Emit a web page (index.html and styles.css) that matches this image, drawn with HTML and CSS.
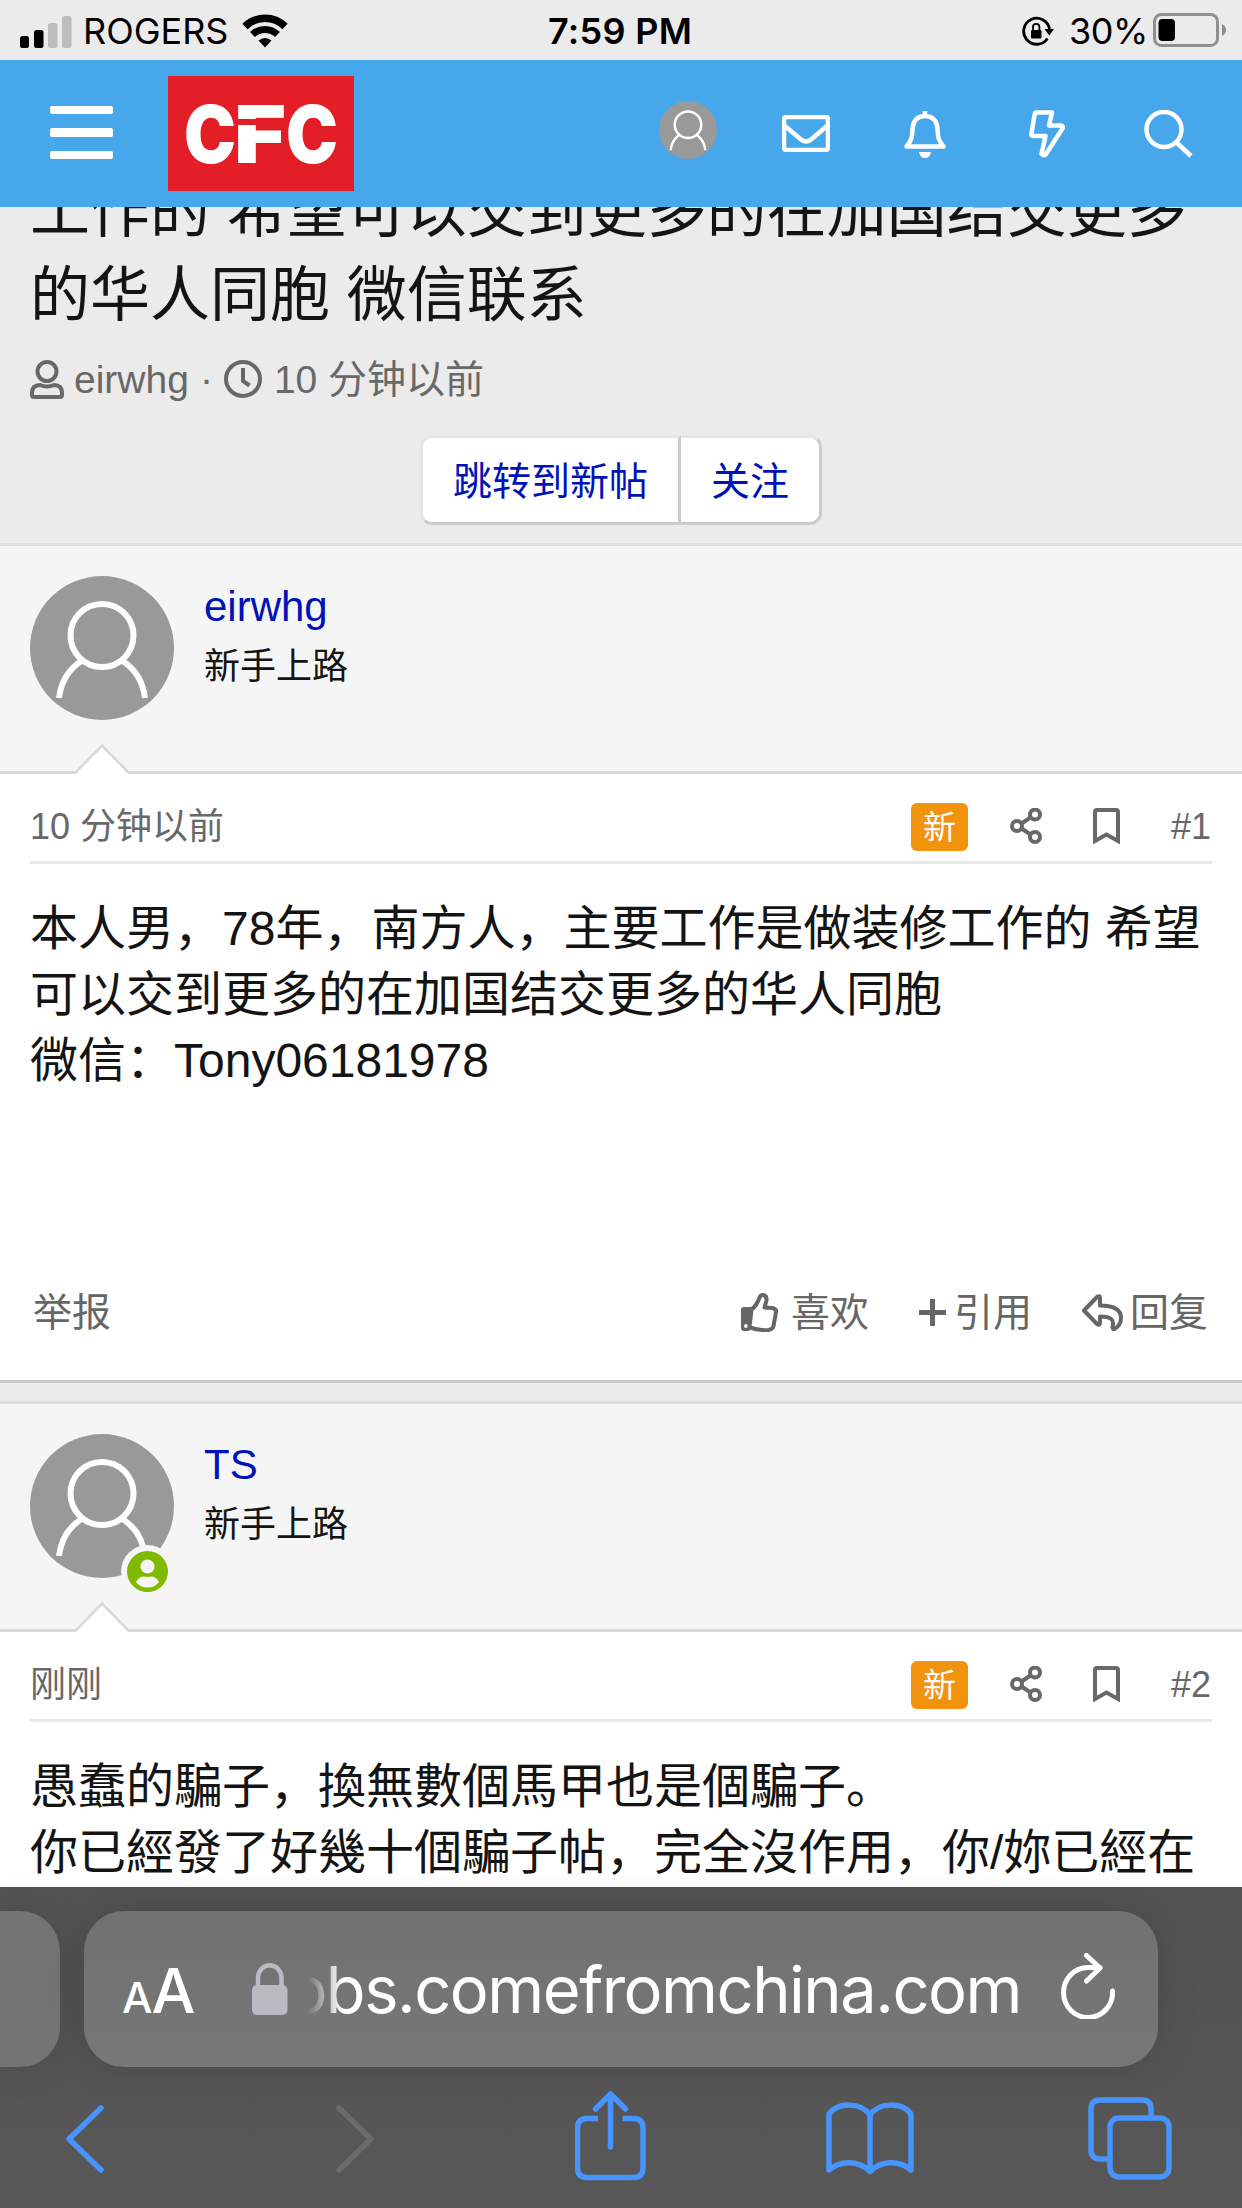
FILE: index.html
```html
<!DOCTYPE html>
<html lang="zh-CN">
<head>
  <meta charset="UTF-8">
  <meta name="viewport" content="width=device-width, initial-scale=1.0">
  <title>CFC</title>
  <link rel="stylesheet" href="styles.css">
</head>
<body>
  <div class="status-bar">
    <svg class="signal" width="52" height="33" viewBox="0 0 52 33">
      <rect x="0" y="21" width="9" height="12" rx="2.5"/>
      <rect x="14" y="15" width="9.500" height="18" rx="2.5"/>
      <rect x="28" y="8" width="9.500" height="25" rx="2.5" fill="#bdbdbd"/>
      <rect x="42" y="1" width="9.500" height="32" rx="2.5" fill="#bdbdbd"/>
    </svg>
    <span class="carrier">ROGERS</span>
    <svg class="wifi" width="46" height="34" viewBox="0 0 46 34">
      <path d="M3 12.500a28.500 28.500 0 0 1 40 0" fill="none" stroke="#000" stroke-width="7.500"/>
      <path d="M10.500 20.500a18 18 0 0 1 25 0" fill="none" stroke="#000" stroke-width="7"/>
      <path d="M16.500 26.500q6.500-5 13 0L23 33.500z"/>
    </svg>
    <span class="time">7:59 PM</span>
    <svg class="rotation-lock" width="32" height="30" viewBox="0 0 32 30">
      <path d="M25.500 22.500A13 13 0 1 1 27.500 13" fill="none" stroke="#000" stroke-width="2.800"/>
      <path d="M22.500 13H32l-4.700 6.500z"/>
      <rect x="9" y="14" width="10.500" height="8.500" rx="1"/>
      <path d="M11 14v-3a3.200 3.200 0 0 1 6.400 0v3" fill="none" stroke="#000" stroke-width="1.800"/>
    </svg>
    <span class="percent">30%</span>
    <svg class="battery" width="74" height="34" viewBox="0 0 74 34">
      <rect x="1.500" y="1.500" width="63" height="31" rx="7" fill="none" stroke="#8f8f8f" stroke-width="3"/>
      <rect x="5.500" y="6" width="16.500" height="22" rx="4"/>
      <path d="M69 11q4 2 4 6t-4 6z" fill="#8f8f8f"/>
    </svg>
  </div>

  <header class="header">
    <div class="menu"><span></span><span></span><span></span></div>
    <div class="logo">
      <svg width="186" height="115" viewBox="0 0 186 115">
        <text x="16" y="87" textLength="52" lengthAdjust="spacingAndGlyphs">C</text>
        <text x="66" y="87" textLength="52" lengthAdjust="spacingAndGlyphs">F</text>
        <text x="118" y="87" textLength="52" lengthAdjust="spacingAndGlyphs">C</text>
        <rect x="69" y="43" width="49" height="6" fill="#e31e26"/>
      </svg>
    </div>
    <nav class="nav">
      <svg class="nav-avatar" width="58" height="58" viewBox="0 0 144 144">
        <circle cx="72" cy="72" r="72" fill="#999"/>
        <g fill="none" stroke="#fff" stroke-width="6">
          <circle cx="72" cy="59" r="33"/>
          <path d="M29 122c2-17 10-30 22-38M115 122c-2-17-10-30-22-38"/>
        </g>
      </svg>
      <svg class="nav-mail" width="48" height="37" viewBox="0 0 48 37">
        <rect x="2" y="2" width="44" height="33" rx="2"/>
        <path d="M3 11l16 13.500q5 4 10 0L45 11"/>
      </svg>
      <svg class="nav-bell" width="42" height="48" viewBox="0 0 42 48">
        <path d="M2.500 36.500C8 30 8 27 8.500 19C9 10 14 6 21 6s12 4 12.500 13c.5 8 .5 11 6 17.500z"/>
        <path d="M21 1V6"/>
        <path class="solid" d="M15 42h12q-1 6-6 6t-6-6z"/>
      </svg>
      <svg class="nav-bolt" width="36" height="48" viewBox="0 0 36 48">
        <path d="M7.500 2.500H23L20 15.500h12q2.500.5 1.500 3L17 44q-2 2.500-4.500 0l4-18H4Q2 26 2.500 23.500L5.500 5q.3-2.500 2-2.500z"/>
      </svg>
      <svg class="nav-search" width="49" height="48" viewBox="0 0 49 48">
        <circle cx="20" cy="19.500" r="17.500"/>
        <path d="M32.500 32.500L47 46"/>
      </svg>
    </nav>
  </header>

  <main class="page">
    <section class="thread-head">
      <h1>工作的 希望可以交到更多的在加国结交更多<br>的华人同胞 微信联系</h1>
      <div class="thread-meta">
        <svg width="34" height="39" viewBox="0 0 34 39">
          <circle cx="17" cy="11.500" r="9.500"/>
          <path d="M10 25q7 3 14 0 8 0 8 8v2q0 2-2 2H4q-2 0-2-2v-2q0-8 8-8z"/>
        </svg>
        <span class="starter">eirwhg</span>
        <span class="dot">·</span>
        <svg width="38" height="38" viewBox="0 0 38 38">
          <circle cx="19" cy="19" r="17"/>
          <path d="M19 8v13l6.500 4.500"/>
        </svg>
        <span class="started">10 分钟以前</span>
      </div>
      <div class="button-group">
        <a class="button">跳转到新帖</a>
        <a class="button">关注</a>
      </div>
    </section>

    <article class="post">
      <div class="user">
        <div class="avatar">
          <svg width="144" height="144" viewBox="0 0 144 144">
            <circle cx="72" cy="72" r="72" fill="#999"/>
            <g fill="none" stroke="#fff" stroke-width="6">
              <circle cx="72" cy="59.500" r="31.500"/>
              <path d="M29 122c2-16 10-29 22.500-37M115 122c-2-16-10-29-22.500-37"/>
            </g>
          </svg>
        </div>
        <div class="user-info">
          <a class="username">eirwhg</a>
          <div class="user-title">新手上路</div>
        </div>
        <svg class="arrow" width="54" height="30" viewBox="0 0 54 30">
          <path d="M0 30L27 2l27 28z" fill="#fefefe"/>
          <path d="M0 29L27 1.500 54 29" fill="none" stroke="#d8d8d8" stroke-width="2.500"/>
        </svg>
      </div>
      <div class="post-main">
        <div class="post-head">
          <span class="date">10 分钟以前</span>
          <span class="badge">新</span>
          <svg class="share" width="32" height="36" viewBox="0 0 32 36">
            <circle cx="25" cy="6.500" r="5"/>
            <circle cx="7" cy="18" r="5"/>
            <circle cx="25" cy="29" r="5"/>
            <path d="M11.500 15.500l9-6M11.500 20.500l9 6"/>
          </svg>
          <svg class="bookmark" width="27" height="36" viewBox="0 0 27 36">
            <path d="M2 33V4q0-2 2-2h19q2 0 2 2v29l-11.500-6.500z"/>
          </svg>
          <span class="number">#1</span>
        </div>
        <div class="post-body">本人男，78年，南方人，主要工作是做装修工作的 希望<br>可以交到更多的在加国结交更多的华人同胞<br>微信：Tony06181978</div>
        <div class="post-actions">
          <span class="report">举报</span>
          <svg class="like" width="37" height="39" viewBox="0 0 37 39">
            <path class="cuff" d="M0 17q0-3 3-3h7v21l-2 3H3q-3 0-3-3z"/>
            <circle class="hole" cx="5" cy="33" r="2"/>
            <path d="M10.500 16.500C14 14 17 9 18.500 4.500q1-3 4-2.500 3.500 1 3 5.500l-2 7 8 .5q4 1 3.500 4l-2.500 14q-1 3.500-5 4-8 .8-19-2.500z"/>
          </svg>
          <span class="like-text">喜欢</span>
          <svg class="quote" width="27" height="27" viewBox="0 0 27 27">
            <path d="M13.500 0v27M0 13.500h27"/>
          </svg>
          <span class="quote-text">引用</span>
          <svg class="reply" width="41" height="37" viewBox="0 0 41 37">
            <path d="M2 16.500L15 3q3-2 3 1v7.500c14 0 21 4 21 12.500 0 5-3 9-6.500 11q-2 .5-2-2c2-7-1-10.500-12.500-10.500V29q0 3-3 1z"/>
          </svg>
          <span class="reply-text">回复</span>
        </div>
      </div>
    </article>

    <article class="post">
      <div class="user">
        <div class="avatar">
          <svg width="144" height="144" viewBox="0 0 144 144">
            <circle cx="72" cy="72" r="72" fill="#999"/>
            <g fill="none" stroke="#fff" stroke-width="6">
              <circle cx="72" cy="59.500" r="31.500"/>
              <path d="M29 122c2-16 10-29 22.500-37M115 122c-2-16-10-29-22.500-37"/>
            </g>
          </svg>
          <svg class="online" width="53" height="53" viewBox="0 0 53 53">
            <circle cx="26.500" cy="26.500" r="26.500" fill="#f5f5f5"/>
            <circle cx="26.500" cy="26.500" r="20.500" fill="#7fb900"/>
            <circle cx="26.500" cy="21.500" r="7" fill="#f5f5f5"/>
            <path d="M15 37q4-7 11.500-5 7.500-2 11.500 5-4 5.500-11.500 5.500T15 37z" fill="#f5f5f5"/>
          </svg>
        </div>
        <div class="user-info">
          <a class="username">TS</a>
          <div class="user-title">新手上路</div>
        </div>
        <svg class="arrow" width="54" height="30" viewBox="0 0 54 30">
          <path d="M0 30L27 2l27 28z" fill="#fefefe"/>
          <path d="M0 29L27 1.500 54 29" fill="none" stroke="#d8d8d8" stroke-width="2.500"/>
        </svg>
      </div>
      <div class="post-main">
        <div class="post-head">
          <span class="date">刚刚</span>
          <span class="badge">新</span>
          <svg class="share" width="32" height="36" viewBox="0 0 32 36">
            <circle cx="25" cy="6.500" r="5"/>
            <circle cx="7" cy="18" r="5"/>
            <circle cx="25" cy="29" r="5"/>
            <path d="M11.500 15.500l9-6M11.500 20.500l9 6"/>
          </svg>
          <svg class="bookmark" width="27" height="36" viewBox="0 0 27 36">
            <path d="M2 33V4q0-2 2-2h19q2 0 2 2v29l-11.500-6.500z"/>
          </svg>
          <span class="number">#2</span>
        </div>
        <div class="post-body">愚蠢的騙子，換無數個馬甲也是個騙子。<br>你已經發了好幾十個騙子帖，完全沒作用，你/妳已經在</div>
      </div>
    </article>
  </main>

  <footer class="browser">
    <div class="tabs-row">
      <div class="tab-prev"></div>
      <div class="address">
        <span class="text-size"><small>A</small>A</span>
        <svg class="lock" width="36" height="52" viewBox="0 0 36 52">
          <rect x="0" y="22" width="35.500" height="30" rx="5" fill="#bbbac2"/>
          <path d="M6 23V15a11.500 12.500 0 0 1 23.500 0v8" fill="none" stroke="#bbbac2" stroke-width="4.500"/>
        </svg>
        <div class="url"><span>obs.comefromchina.com</span></div>
        <svg class="reload" width="54" height="66" viewBox="0 0 54 66">
          <path d="M51.500 38A24.500 25 0 1 1 27 14.500h12M25.500 2.500L39 15 25.500 28"/>
        </svg>
      </div>
    </div>
    <div class="toolbar">
      <svg class="back" width="38" height="68" viewBox="0 0 38 68">
        <path d="M35 3L3 34l32 31"/>
      </svg>
      <svg class="forward" width="38" height="68" viewBox="0 0 38 68">
        <path d="M3 3l32 31L3 65"/>
      </svg>
      <svg class="share-sheet" width="71" height="90" viewBox="0 0 71 90">
        <path d="M23 27.500H12q-9.500 0-9.500 9.500v40q0 9.500 9.500 9.500h46.500q9.500 0 9.500-9.500V37q0-9.500-9.500-9.500H47.500" stroke-linecap="butt"/>
        <path d="M35.500 56V3.500M20.500 18l15-15 15 15"/>
      </svg>
      <svg class="book" width="88" height="73" viewBox="0 0 88 73">
        <path d="M44 69.500V13C35 0 12 0 3 12v56c11-10 30-10 41 1.500 11-11.500 30-11.500 41-1.500V12C76 0 53 0 44 13"/>
      </svg>
      <svg class="tabs" width="84" height="83" viewBox="0 0 84 83">
        <rect x="22" y="21" width="59" height="59" rx="9"/>
        <path d="M22 62H12q-9 0-9-9V12q0-9 9-9h42q9 0 9 9v9"/>
      </svg>
    </div>
  </footer>
</body>
</html>
```
FILE: styles.css
```css
* {
  box-sizing: border-box;
}

body {
  margin: 0;
  width: 1242px;
  height: 2208px;
  overflow: hidden;
  display: flex;
  flex-direction: column;
  background: #ebebeb;
  color: #141414;
  font-family: "Liberation Sans", "Noto Sans CJK SC", sans-serif;
}

svg {
  display: block;
  flex: none;
}

/* phone status bar */
.status-bar {
  height: 60px;
  flex: none;
  display: flex;
  align-items: center;
  padding: 2px 15px 0 20px;
  font-family: Inter, sans-serif;
  font-size: 36px;
  color: #000;
  white-space: nowrap;
}

.carrier {
  width: 144px;
  margin-left: 11px;
}

.wifi {
  margin-left: 15px;
}

.time {
  width: 146px;
  margin-left: 260px;
  font-weight: 600;
  letter-spacing: 0.3px;
}

.rotation-lock {
  margin-left: auto;
}

.percent {
  width: 76px;
  margin-left: 15px;
  letter-spacing: -0.5px;
}

.battery {
  margin-left: 8px;
  margin-bottom: 2px;
}

/* site header */
.header {
  height: 147px;
  flex: none;
  display: flex;
  align-items: center;
  padding: 0 49px 0 50px;
  background: #47a7eb;
}

.menu {
  width: 63px;
  display: flex;
  flex-direction: column;
  gap: 14px;
  margin-bottom: 2px;
}

.menu span {
  height: 8.500px;
  border-radius: 2px;
  background: #fff;
}

.logo {
  width: 186px;
  height: 115px;
  margin-left: 55px;
  background: #e31e26;
}

.logo text {
  font-family: Inter, sans-serif;
  font-size: 80px;
  font-weight: 900;
  fill: #fff;
}

.nav {
  margin-left: auto;
  display: flex;
  align-items: center;
  fill: none;
  stroke: #fff;
  stroke-width: 4.500;
  stroke-linejoin: round;
}

.nav-avatar {
  margin-bottom: 7px;
  stroke: none;
}

.nav-mail {
  margin-left: 65px;
}

.nav-bell {
  margin-left: 74px;
}

.nav-bell .solid {
  fill: #fff;
  stroke: none;
}

.nav-bolt {
  margin-left: 83px;
}

.nav-search {
  margin-left: 79px;
}

/* thread */
.page {
  flex: 1;
  min-height: 0;
  overflow: hidden;
}

.thread-head {
  height: 373px;
  margin-top: -37px;
}

h1 {
  margin: 0;
  padding-left: 30px;
  font-size: 60px;
  font-weight: 400;
  line-height: 84px;
  white-space: nowrap;
}

.thread-meta {
  display: flex;
  align-items: center;
  height: 54px;
  margin-top: 14px;
  padding-left: 30px;
  font-size: 39px;
  color: #686868;
}

.thread-meta span {
  line-height: 50px;
  padding-top: 2px;
}

.thread-meta svg {
  fill: none;
  stroke: #686868;
  stroke-width: 4;
}

.starter {
  margin-left: 10px;
}

.dot {
  margin: 0 11px;
}

.started {
  margin-left: 12px;
}

.button-group {
  display: flex;
  justify-content: center;
  margin-top: 29px;
}

.button {
  height: 90px;
  padding: 0 30px;
  border: 3px solid;
  border-color: #e5e5e5 #cbcbcb #cbcbcb #e5e5e5;
  background: #fefefe;
  color: #0012b8;
  font-size: 39px;
  line-height: 87px;
}

.button:first-child {
  border-radius: 12px 0 0 12px;
}

.button:last-child {
  border-left: 0;
  border-radius: 0 12px 12px 0;
}

.post {
  margin-bottom: 18px;
  border-top: 3px solid #dedede;
  border-bottom: 3px solid #cacaca;
  background: #fefefe;
}

.user {
  position: relative;
  display: flex;
  gap: 30px;
  height: 228px;
  padding: 30px;
  border-bottom: 3px solid #d8d8d8;
  background: #f5f5f5;
}

.avatar {
  position: relative;
  width: 144px;
  height: 144px;
}

.online {
  position: absolute;
  left: 91px;
  top: 111px;
}

.user-info {
  padding-top: 1px;
}

.username {
  display: block;
  font-size: 42px;
  line-height: 60px;
  color: #0012b8;
}

.user-title {
  margin-top: 5px;
  font-size: 36px;
  line-height: 50px;
}

.arrow {
  position: absolute;
  left: 75px;
  bottom: -3px;
}

.post-main {
  padding: 0 30px;
}

.post-head {
  display: flex;
  align-items: center;
  height: 90px;
  padding-top: 19px;
  border-bottom: 3px solid #e8e8e8;
  font-size: 36px;
  line-height: 50px;
  color: #686868;
}

.post-head svg {
  margin-bottom: 2px;
  fill: none;
  stroke: #686868;
  stroke-width: 4;
}

.badge {
  width: 57px;
  height: 48px;
  margin-left: auto;
  border-radius: 6px;
  background: #f2930d;
  color: #fefefe;
  font-size: 33px;
  line-height: 50px;
  text-align: center;
}

.share {
  margin-left: 42px;
}

.bookmark {
  margin-left: 51px;
}

.number {
  width: 41px;
  margin-left: 51px;
}

.post-body {
  min-height: 422px;
  padding-top: 32px;
  font-size: 48px;
  line-height: 66px;
  white-space: nowrap;
}

.post-actions {
  display: flex;
  align-items: center;
  height: 94px;
  padding: 0 4px 40px 3px;
  font-size: 39px;
  line-height: 54px;
  color: #666;
}

.post-actions svg {
  margin-bottom: 1px;
  fill: none;
  stroke: #666;
  stroke-width: 4;
  stroke-linejoin: round;
}

.post-actions .cuff {
  fill: #666;
  stroke: none;
}

.post-actions .hole {
  fill: #fefefe;
  stroke: none;
}

.like {
  margin-left: auto;
}

.like-text {
  margin-left: 13px;
}

.quote {
  margin-left: 50px;
}

.post-actions .quote {
  stroke-width: 5;
}

.quote-text {
  margin-left: 8px;
}

.reply {
  margin-left: 50px;
}

.reply-text {
  margin-left: 7px;
}

/* browser chrome */
.browser {
  position: relative;
  height: 321px;
  flex: none;
  padding-top: 24px;
  background: linear-gradient(#535353, #575757);
}

.tabs-row {
  display: flex;
  gap: 24px;
}

.tab-prev {
  width: 60px;
  height: 156px;
  border-radius: 0 40px 40px 0;
  background: #747474;
  box-shadow: 0 0 40px rgba(0, 0, 0, 0.12);
}

.address {
  width: 1074px;
  height: 156px;
  display: flex;
  align-items: center;
  padding: 0 43px 0 38px;
  border-radius: 40px;
  background: linear-gradient(#717171, #777);
  box-shadow: 0 0 40px rgba(0, 0, 0, 0.16);
  color: #fff;
  font-family: Inter, sans-serif;
}

.text-size {
  width: 73px;
  padding-top: 3px;
  font-size: 62px;
  font-weight: 500;
  letter-spacing: -1px;
  white-space: nowrap;
}

.text-size small {
  font-size: 43px;
}

.lock {
  margin-left: 57px;
}

.url {
  width: 713px;
  margin-left: 20px;
  padding-top: 2px;
  overflow: hidden;
  display: flex;
  justify-content: flex-end;
  font-size: 65px;
  letter-spacing: -1.5px;
  line-height: 80px;
  white-space: nowrap;
  -webkit-mask-image: linear-gradient(90deg, transparent, #000 34px);
  mask-image: linear-gradient(90deg, transparent, #000 34px);
}

.reload {
  margin: 0 0 6px auto;
  fill: none;
  stroke: #fff;
  stroke-width: 5;
  stroke-linecap: round;
  stroke-linejoin: round;
}

.toolbar {
  position: relative;
  display: flex;
  align-items: center;
  height: 90px;
  margin-top: 24px;
  padding: 0 70px 0 66px;
  fill: none;
  stroke: #4794ff;
  stroke-width: 5.500;
  stroke-linecap: round;
  stroke-linejoin: round;
}

.back {
  margin-top: 5px;
}

.forward {
  margin: 5px 0 0 232px;
  stroke: #6b6b6b;
}

.share-sheet {
  margin-left: 201px;
}

.book {
  margin: 4px 0 0 180px;
}

.tabs {
  margin: 4px 0 0 174px;
}
```
